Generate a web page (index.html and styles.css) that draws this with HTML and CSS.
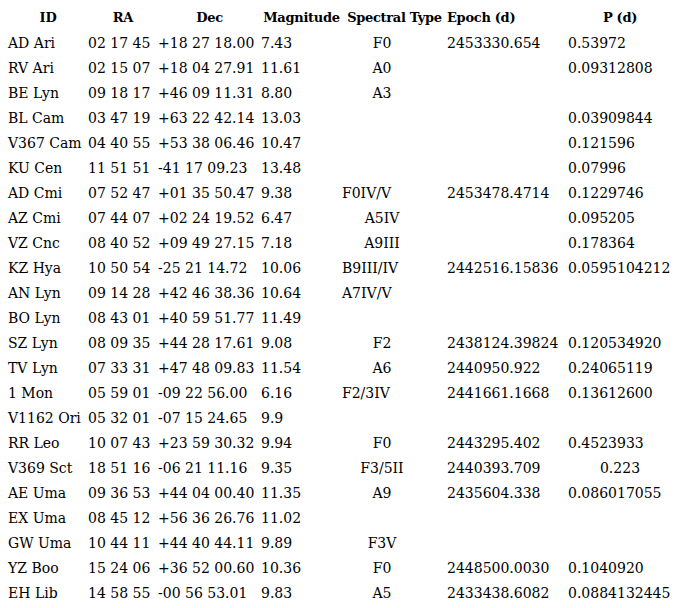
FILE: index.html
```html
<!DOCTYPE html>
<html>
<head>
<meta charset="utf-8">
<link rel="stylesheet" href="styles.css">
</head>
<body>
<table class="stars">
<colgroup>
<col class="c-id"><col class="c-ra"><col class="c-dec"><col class="c-mag"><col class="c-sp"><col class="c-ep"><col class="c-p">
</colgroup>
<thead>
<tr><th>ID</th><th>RA</th><th>Dec</th><th>Magnitude</th><th>Spectral Type</th><th class="left">Epoch (d)</th><th>P (d)</th></tr>
</thead>
<tbody>
<tr><td>AD Ari</td><td>02 17 45</td><td>+18 27 18.00</td><td>7.43</td><td class="sp">F0</td><td>2453330.654</td><td>0.53972</td></tr>
<tr><td>RV Ari</td><td>02 15 07</td><td>+18 04 27.91</td><td>11.61</td><td class="sp">A0</td><td></td><td>0.09312808</td></tr>
<tr><td>BE Lyn</td><td>09 18 17</td><td>+46 09 11.31</td><td>8.80</td><td class="sp">A3</td><td></td><td></td></tr>
<tr><td>BL Cam</td><td>03 47 19</td><td>+63 22 42.14</td><td>13.03</td><td class="sp"></td><td></td><td>0.03909844</td></tr>
<tr><td>V367 Cam</td><td>04 40 55</td><td>+53 38 06.46</td><td>10.47</td><td class="sp"></td><td></td><td>0.121596</td></tr>
<tr><td>KU Cen</td><td>11 51 51</td><td>-41 17 09.23</td><td>13.48</td><td class="sp"></td><td></td><td>0.07996</td></tr>
<tr><td>AD Cmi</td><td>07 52 47</td><td>+01 35 50.47</td><td>9.38</td><td class="sp left">F0IV/V</td><td>2453478.4714</td><td>0.1229746</td></tr>
<tr><td>AZ Cmi</td><td>07 44 07</td><td>+02 24 19.52</td><td>6.47</td><td class="sp">A5IV</td><td></td><td>0.095205</td></tr>
<tr><td>VZ Cnc</td><td>08 40 52</td><td>+09 49 27.15</td><td>7.18</td><td class="sp">A9III</td><td></td><td>0.178364</td></tr>
<tr><td>KZ Hya</td><td>10 50 54</td><td>-25 21 14.72</td><td>10.06</td><td class="sp left">B9III/IV</td><td>2442516.15836</td><td>0.0595104212</td></tr>
<tr><td>AN Lyn</td><td>09 14 28</td><td>+42 46 38.36</td><td>10.64</td><td class="sp left">A7IV/V</td><td></td><td></td></tr>
<tr><td>BO Lyn</td><td>08 43 01</td><td>+40 59 51.77</td><td>11.49</td><td class="sp"></td><td></td><td></td></tr>
<tr><td>SZ Lyn</td><td>08 09 35</td><td>+44 28 17.61</td><td>9.08</td><td class="sp">F2</td><td>2438124.39824</td><td>0.120534920</td></tr>
<tr><td>TV Lyn</td><td>07 33 31</td><td>+47 48 09.83</td><td>11.54</td><td class="sp">A6</td><td>2440950.922</td><td>0.24065119</td></tr>
<tr><td>1 Mon</td><td>05 59 01</td><td>-09 22 56.00</td><td>6.16</td><td class="sp left">F2/3IV</td><td>2441661.1668</td><td>0.13612600</td></tr>
<tr><td>V1162 Ori</td><td>05 32 01</td><td>-07 15 24.65</td><td>9.9</td><td class="sp"></td><td></td><td></td></tr>
<tr><td>RR Leo</td><td>10 07 43</td><td>+23 59 30.32</td><td>9.94</td><td class="sp">F0</td><td>2443295.402</td><td>0.4523933</td></tr>
<tr><td>V369 Sct</td><td>18 51 16</td><td>-06 21 11.16</td><td>9.35</td><td class="sp">F3/5II</td><td>2440393.709</td><td class="center">0.223</td></tr>
<tr><td>AE Uma</td><td>09 36 53</td><td>+44 04 00.40</td><td>11.35</td><td class="sp">A9</td><td>2435604.338</td><td>0.086017055</td></tr>
<tr><td>EX Uma</td><td>08 45 12</td><td>+56 36 26.76</td><td>11.02</td><td class="sp"></td><td></td><td></td></tr>
<tr><td>GW Uma</td><td>10 44 11</td><td>+44 40 44.11</td><td>9.89</td><td class="sp">F3V</td><td></td><td></td></tr>
<tr><td>YZ Boo</td><td>15 24 06</td><td>+36 52 00.60</td><td>10.36</td><td class="sp">F0</td><td>2448500.0030</td><td>0.1040920</td></tr>
<tr><td>EH Lib</td><td>14 58 55</td><td>-00 56 53.01</td><td>9.83</td><td class="sp">A5</td><td>2433438.6082</td><td>0.0884132445</td></tr>
</tbody>
</table>
</body>
</html>
```

FILE: styles.css
```css
html, body {
  margin: 0;
  padding: 0;
  background: #ffffff;
}
body {
  padding: 4px 0 0 8px;
  font-family: "DejaVu Serif", serif;
  font-size: 14px;
  color: #000000;
}
.stars {
  border-collapse: collapse;
  table-layout: fixed;
  width: 664px;
}
.c-id { width: 80px; }
.c-ra { width: 70px; }
.c-dec { width: 103px; }
.c-mag { width: 81px; }
.c-sp { width: 105px; }
.c-ep { width: 121px; }
.c-p { width: 104px; }
.stars th {
  height: 26px;
  padding: 0;
  font-size: 13px;
  letter-spacing: -0.3px;
  font-weight: bold;
  text-align: center;
  white-space: nowrap;
  vertical-align: middle;
}
.stars td {
  height: 25px;
  padding: 0;
  text-align: left;
  white-space: nowrap;
  vertical-align: middle;
}
.stars th.left { text-align: left; }
.stars td.sp {
  text-align: center;
  padding-right: 25px;
}
.stars td.sp.left {
  text-align: left;
  padding-right: 0;
}
.stars td.center { text-align: center; }
```
